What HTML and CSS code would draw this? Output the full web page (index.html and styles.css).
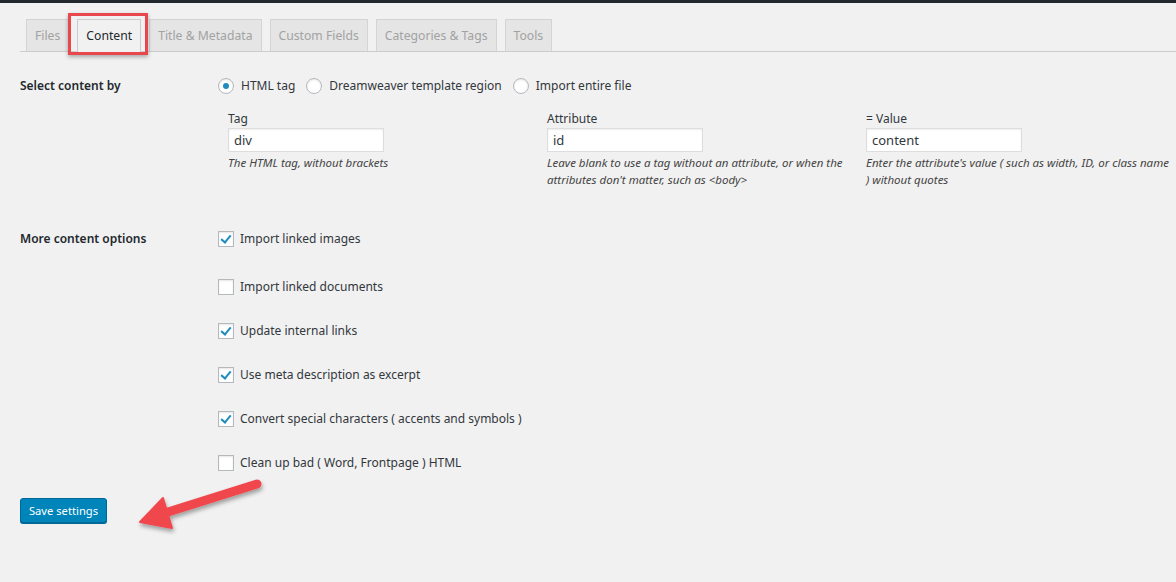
FILE: index.html
```html
<!DOCTYPE html>
<html>
<head>
<meta charset="utf-8">
<link rel="stylesheet" href="styles.css">
</head>
<body>
<div class="topbar"></div>
<div class="wrap">
  <nav class="tabs">
    <span class="tab">Files</span>
    <span class="tab tab-active">Content</span>
    <span class="tab">Title &amp; Metadata</span>
    <span class="tab">Custom Fields</span>
    <span class="tab">Categories &amp; Tags</span>
    <span class="tab">Tools</span>
  </nav>

  <div class="row row-select">
    <div class="th">Select content by</div>
    <div class="td">
      <div class="radios">
        <label class="radio-item"><span class="radio checked"></span>HTML tag</label>
        <label class="radio-item"><span class="radio"></span>Dreamweaver template region</label>
        <label class="radio-item"><span class="radio"></span>Import entire file</label>
      </div>
      <div class="fields">
        <div class="field">
          <div class="field-label">Tag</div>
          <div class="input">div</div>
          <p class="desc">The HTML tag, without brackets</p>
        </div>
        <div class="field">
          <div class="field-label">Attribute</div>
          <div class="input">id</div>
          <p class="desc">Leave blank to use a tag without an attribute, or when the attributes don't matter, such as &lt;body&gt;</p>
        </div>
        <div class="field">
          <div class="field-label">= Value</div>
          <div class="input">content</div>
          <p class="desc">Enter the attribute's value ( such as width, ID, or class name ) without quotes</p>
        </div>
      </div>
    </div>
  </div>

  <div class="row row-options">
    <div class="th">More content options</div>
    <div class="td">
      <ul class="options">
        <li class="opt opt-first"><span class="check checked"></span>Import linked images</li>
        <li class="opt"><span class="check"></span>Import linked documents</li>
        <li class="opt"><span class="check checked"></span>Update internal links</li>
        <li class="opt"><span class="check checked"></span>Use meta description as excerpt</li>
        <li class="opt"><span class="check checked"></span>Convert special characters ( accents and symbols )</li>
        <li class="opt"><span class="check"></span>Clean up bad ( Word, Frontpage ) HTML</li>
      </ul>
    </div>
  </div>

  <button class="btn-primary">Save settings</button>
</div>

<div class="highlight-box"></div>
<svg class="arrow" width="150" height="80" viewBox="0 0 150 80">
  <defs>
    <filter id="sh" x="-20%" y="-20%" width="140%" height="160%">
      <feDropShadow dx="1" dy="3" stdDeviation="2" flood-color="#000" flood-opacity="0.35"/>
    </filter>
  </defs>
  <g filter="url(#sh)" fill="#f0474d" stroke="#f0474d">
    <line x1="127" y1="14" x2="38" y2="42" stroke-width="9" stroke-linecap="round"/>
    <polygon points="10,52 33,28 42,58" stroke-width="2" stroke-linejoin="round"/>
  </g>
</svg>
</body>
</html>
```

FILE: styles.css
```css
html, body {
  margin: 0;
  padding: 0;
  background: #f1f1f1;
}
body {
  font-family: "Noto Sans", "Open Sans", "DejaVu Sans", sans-serif;
  font-size: 12px;
  color: #32373c;
  width: 1176px;
  height: 582px;
  overflow: hidden;
  position: relative;
}
.topbar {
  height: 3px;
  background: #23282d;
}
.wrap {
  padding: 0 0 0 20px;
}
.tabs {
  display: flex;
  margin-top: 16px;
  padding-left: 6px;
  border-bottom: 1px solid #cccccc;
  height: 32px;
  box-sizing: content-box;
}
.tab {
  display: block;
  height: 32px;
  box-sizing: border-box;
  padding: 0 8px;
  line-height: 31px;
  margin-right: 8px;
  border: 1px solid #d4d4d4;
  border-bottom: none;
  background: #e5e5e5;
  color: #a2a2a2;
  font-size: 12.2px;
}
.tab-active {
  background: #f1f1f1;
  color: #23282d;
  height: 33px;
  border-color: #cccccc;
}
.row {
  display: flex;
}
.th {
  width: 198px;
  flex: none;
  font-weight: 600;
  line-height: 20px;
  color: #23282d;
}
.td {
  flex: 1;
}
.row-select {
  margin-top: 24px;
}
.radios {
  display: flex;
  line-height: 20px;
}
.radio-item {
  display: flex;
  align-items: center;
  margin-right: 11px;
}
.radio {
  width: 14px;
  height: 14px;
  border: 1px solid #b4b9be;
  border-radius: 50%;
  background: #fff;
  margin-right: 7px;
  box-shadow: inset 0 1px 2px rgba(0,0,0,.1);
  position: relative;
}
.radio.checked::after {
  content: "";
  position: absolute;
  left: 4px;
  top: 4px;
  width: 6px;
  height: 6px;
  border-radius: 50%;
  background: #1e8cbe;
}
.fields {
  display: flex;
  margin-left: 10px;
  margin-top: 13px;
}
.field {
  width: 306px;
  margin-right: 13px;
}
.field-label {
  line-height: 20px;
  margin-bottom: -1px;
}
.input {
  width: 156px;
  height: 24px;
  box-sizing: border-box;
  border: 1px solid #dddddd;
  background: #fff;
  box-shadow: inset 0 1px 2px rgba(0,0,0,.07);
  padding: 0 5px;
  line-height: 22px;
  font-size: 13px;
  color: #32373c;
}
.desc {
  margin: 2px 0 0;
  font-style: italic;
  font-size: 11.5px;
  line-height: 17px;
  color: #444;
}
.row-options {
  margin-top: 41px;
}
.options {
  list-style: none;
  margin: 0;
  padding: 0;
  display: flex;
  flex-direction: column;
  gap: 24px;
}
.opt {
  display: flex;
  align-items: center;
  line-height: 20px;
}
.opt-first {
  margin-bottom: 4px;
}
.check {
  width: 14px;
  height: 14px;
  border: 1px solid #b4b9be;
  background: #fff;
  margin-right: 6px;
  box-shadow: inset 0 1px 2px rgba(0,0,0,.1);
  position: relative;
  flex: none;
}
.check.checked::after {
  content: "";
  position: absolute;
  left: 4px;
  top: 1px;
  width: 4px;
  height: 8px;
  border-right: 2px solid #1e8cbe;
  border-bottom: 2px solid #1e8cbe;
  transform: rotate(40deg);
}
.btn-primary {
  display: block;
  margin-top: 25px;
  width: 87px;
  height: 25px;
  padding: 0;
  border: 1px solid #006799;
  border-radius: 3px;
  background: #0085ba;
  color: #fff;
  font-family: inherit;
  font-size: 11.2px;
  box-shadow: 0 1px 0 #006799;
}
.highlight-box {
  position: absolute;
  left: 68px;
  top: 13px;
  width: 80px;
  height: 42px;
  box-sizing: border-box;
  border: 3px solid #e8474d;
  box-shadow: 0 2px 4px rgba(0,0,0,.3);
}
.arrow {
  position: absolute;
  left: 130px;
  top: 470px;
}
```
